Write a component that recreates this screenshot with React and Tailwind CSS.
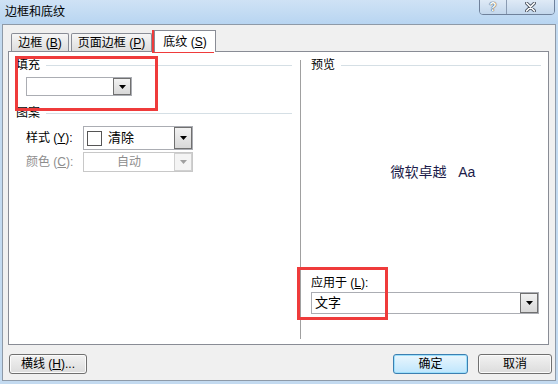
import React from "react";

const font = "font-['Liberation_Sans','Noto_Sans_CJK_SC',sans-serif]";

function Arrow({ disabled }) {
  return (
    <svg width="7" height="4" viewBox="0 0 7 4">
      <path d="M0 0 H7 L3.5 4 Z" fill={disabled ? "#a0a0a0" : "#000"} />
    </svg>
  );
}

function DropButton({ disabled }) {
  return (
    <div
      className={`w-[18px] self-stretch flex items-center justify-center border ${
        disabled ? "border-[#d0d0d0] bg-[#f4f4f4]" : "border-[#707070] bg-linear-to-b from-[#f2f2f2] to-[#d8d8d8]"
      }`}
    >
      <Arrow disabled={disabled} />
    </div>
  );
}

function GroupHeader({ children }) {
  return (
    <div className="flex items-center gap-[6px] h-[13px]">
      <span className="leading-[13px]">{children}</span>
      <div className="flex-1 h-px bg-[#d5dfe5]" />
    </div>
  );
}

function Tab({ children, active, w }) {
  return active ? (
    <div className={`${w} h-[22px] -mb-px z-10 bg-white border border-b-0 border-[#898c95] flex items-center justify-center`}>
      {children}
    </div>
  ) : (
    <div className={`${w} h-[18px] bg-linear-to-b from-[#f6f6f6] to-[#dddddd] border border-b-0 border-[#898c95] rounded-t-[2px] flex items-center justify-center`}>
      {children}
    </div>
  );
}

function Button({ children, w, primary }) {
  return (
    <div
      className={`${w} h-[20px] rounded-[3px] border flex items-center justify-center ${
        primary
          ? "border-[#3c7fb1] shadow-[inset_0_0_0_1px_#9de0fc] bg-linear-to-b from-[#eaf6fd] to-[#bee6fd]"
          : "border-[#707070] shadow-[inset_0_0_0_1px_#fbfbfb] bg-linear-to-b from-[#f2f2f2] to-[#dcdcdc]"
      }`}
    >
      {children}
    </div>
  );
}

export default function App() {
  return (
    <div className={`w-[558px] h-[384px] bg-[#c3daf0] relative overflow-hidden text-[12px] text-black ${font}`}>
      {/* Title bar */}
      <div className="h-[24px] bg-linear-to-b from-[#cfe2f5] to-[#b8d5f1] flex items-center pl-[5px]">
        <span className="leading-none">边框和底纹</span>
      </div>
      <div className="absolute top-[-1px] right-[3px] flex h-[16px] rounded-b-[4px] border border-[#6f819b] overflow-hidden">
        <div className="w-[27px] bg-linear-to-b from-[#dfeaf6] to-[#c3d7ec] flex items-center justify-center border-r border-[#8a9bb2]">
          <span className="text-white font-bold text-[12px] leading-none [text-shadow:0_0_1px_#333,0_0_1px_#333]">?</span>
        </div>
        <div className="w-[47px] bg-linear-to-b from-[#dfeaf6] to-[#c3d7ec] flex items-center justify-center">
          <svg width="11" height="10" viewBox="0 0 11 10">
            <path d="M1.5 1 L9.5 9 M9.5 1 L1.5 9" stroke="#4a5361" strokeWidth="3.2" strokeLinecap="round" />
            <path d="M1.5 1 L9.5 9 M9.5 1 L1.5 9" stroke="#fff" strokeWidth="1.6" strokeLinecap="round" />
          </svg>
        </div>
      </div>

      {/* Dialog body */}
      <div className="ml-[2px] w-[554px] h-[357px] bg-[#f0f0f0] border border-[#8e9aa8] pt-[6px] pl-[5px] flex flex-col">
        {/* Tabs */}
        <div className="flex items-end h-[20px] pl-[3px] gap-[2px]">
          <Tab w="w-[58px]">
            <span>边框 (<u>B</u>)</span>
          </Tab>
          <Tab w="w-[81px]">
            <span>页面边框 (<u>P</u>)</span>
          </Tab>
          <Tab w="w-[62px]" active>
            <span>底纹 (<u>S</u>)</span>
          </Tab>
        </div>

        {/* Panel */}
        <div className="w-[541px] h-[294px] bg-white border border-[#898c95] flex">
          {/* Left column */}
          <div className="w-[288px] pl-[7px] pr-[5px] pt-[7px] flex flex-col">
            <GroupHeader>填充</GroupHeader>
            <div className="ml-[10px] mt-[5px] w-[106px] h-[19px] border border-[#abadb3] flex bg-white">
              <div className="flex-1" />
              <DropButton />
            </div>
            <div className="mt-[11px]">
              <GroupHeader>图案</GroupHeader>
            </div>
            <div className="mt-[6px] flex items-center">
              <span className="ml-[10px] w-[57px]">样式 (<u>Y</u>):</span>
              <div className="w-[110px] h-[24px] border border-[#abadb3] flex items-center bg-white">
                <div className="ml-[3px] w-[15px] h-[15px] border border-[#555]" />
                <span className="ml-[6px] flex-1 text-[13px]">清除</span>
                <DropButton />
              </div>
            </div>
            <div className="mt-[2px] flex items-center text-[#8d8d8d]">
              <span className="ml-[10px] w-[57px]">颜色 (<u>C</u>):</span>
              <div className="w-[110px] h-[20px] border border-[#c8c8c8] flex items-center">
                <span className="flex-1 text-center">自动</span>
                <DropButton disabled />
              </div>
            </div>
          </div>

          {/* Separator */}
          <div className="mt-[8px] mb-[5px] w-px bg-[#a0a0a0] ml-[3px]" />

          {/* Right column */}
          <div className="flex-1 pl-[10px] pr-[7px] pt-[7px] flex flex-col">
            <GroupHeader>预览</GroupHeader>
            <div className="flex-1 flex items-center justify-center pl-[14px] pb-[4px]">
              <span className="text-[14px] text-[#1c1c4a]">
                微软卓越&nbsp;&nbsp;&nbsp;Aa
              </span>
            </div>
            <span className="leading-[13px]">应用于 (<u>L</u>):</span>
            <div className="mt-[2px] mb-[30px] w-[228px] h-[22px] border border-[#abadb3] flex items-center bg-white">
              <span className="ml-[3px] flex-1 text-[13px]">文字</span>
              <DropButton />
            </div>
          </div>
        </div>

        {/* Bottom buttons */}
        <div className="mt-[9px] flex pr-[3px]">
          <Button w="w-[78px] ml-[1px]">
            <span>横线 (<u>H</u>)...</span>
          </Button>
          <div className="flex-1" />
          <Button w="w-[75px]" primary>
            <span>确定</span>
          </Button>
          <Button w="w-[74px] ml-[10px]">
            <span>取消</span>
          </Button>
        </div>
      </div>

      {/* Red highlight boxes */}
      <div className="absolute left-[152px] top-[30px] w-[62px] h-[23px] border-[3px] border-[#ef3b3b]" />
      <div className="absolute left-[15px] top-[56px] w-[143px] h-[55px] border-[3px] border-[#ef3b3b]" />
      <div className="absolute left-[297px] top-[267px] w-[91px] h-[53px] border-[3px] border-[#ef3b3b]" />
    </div>
  );
}
